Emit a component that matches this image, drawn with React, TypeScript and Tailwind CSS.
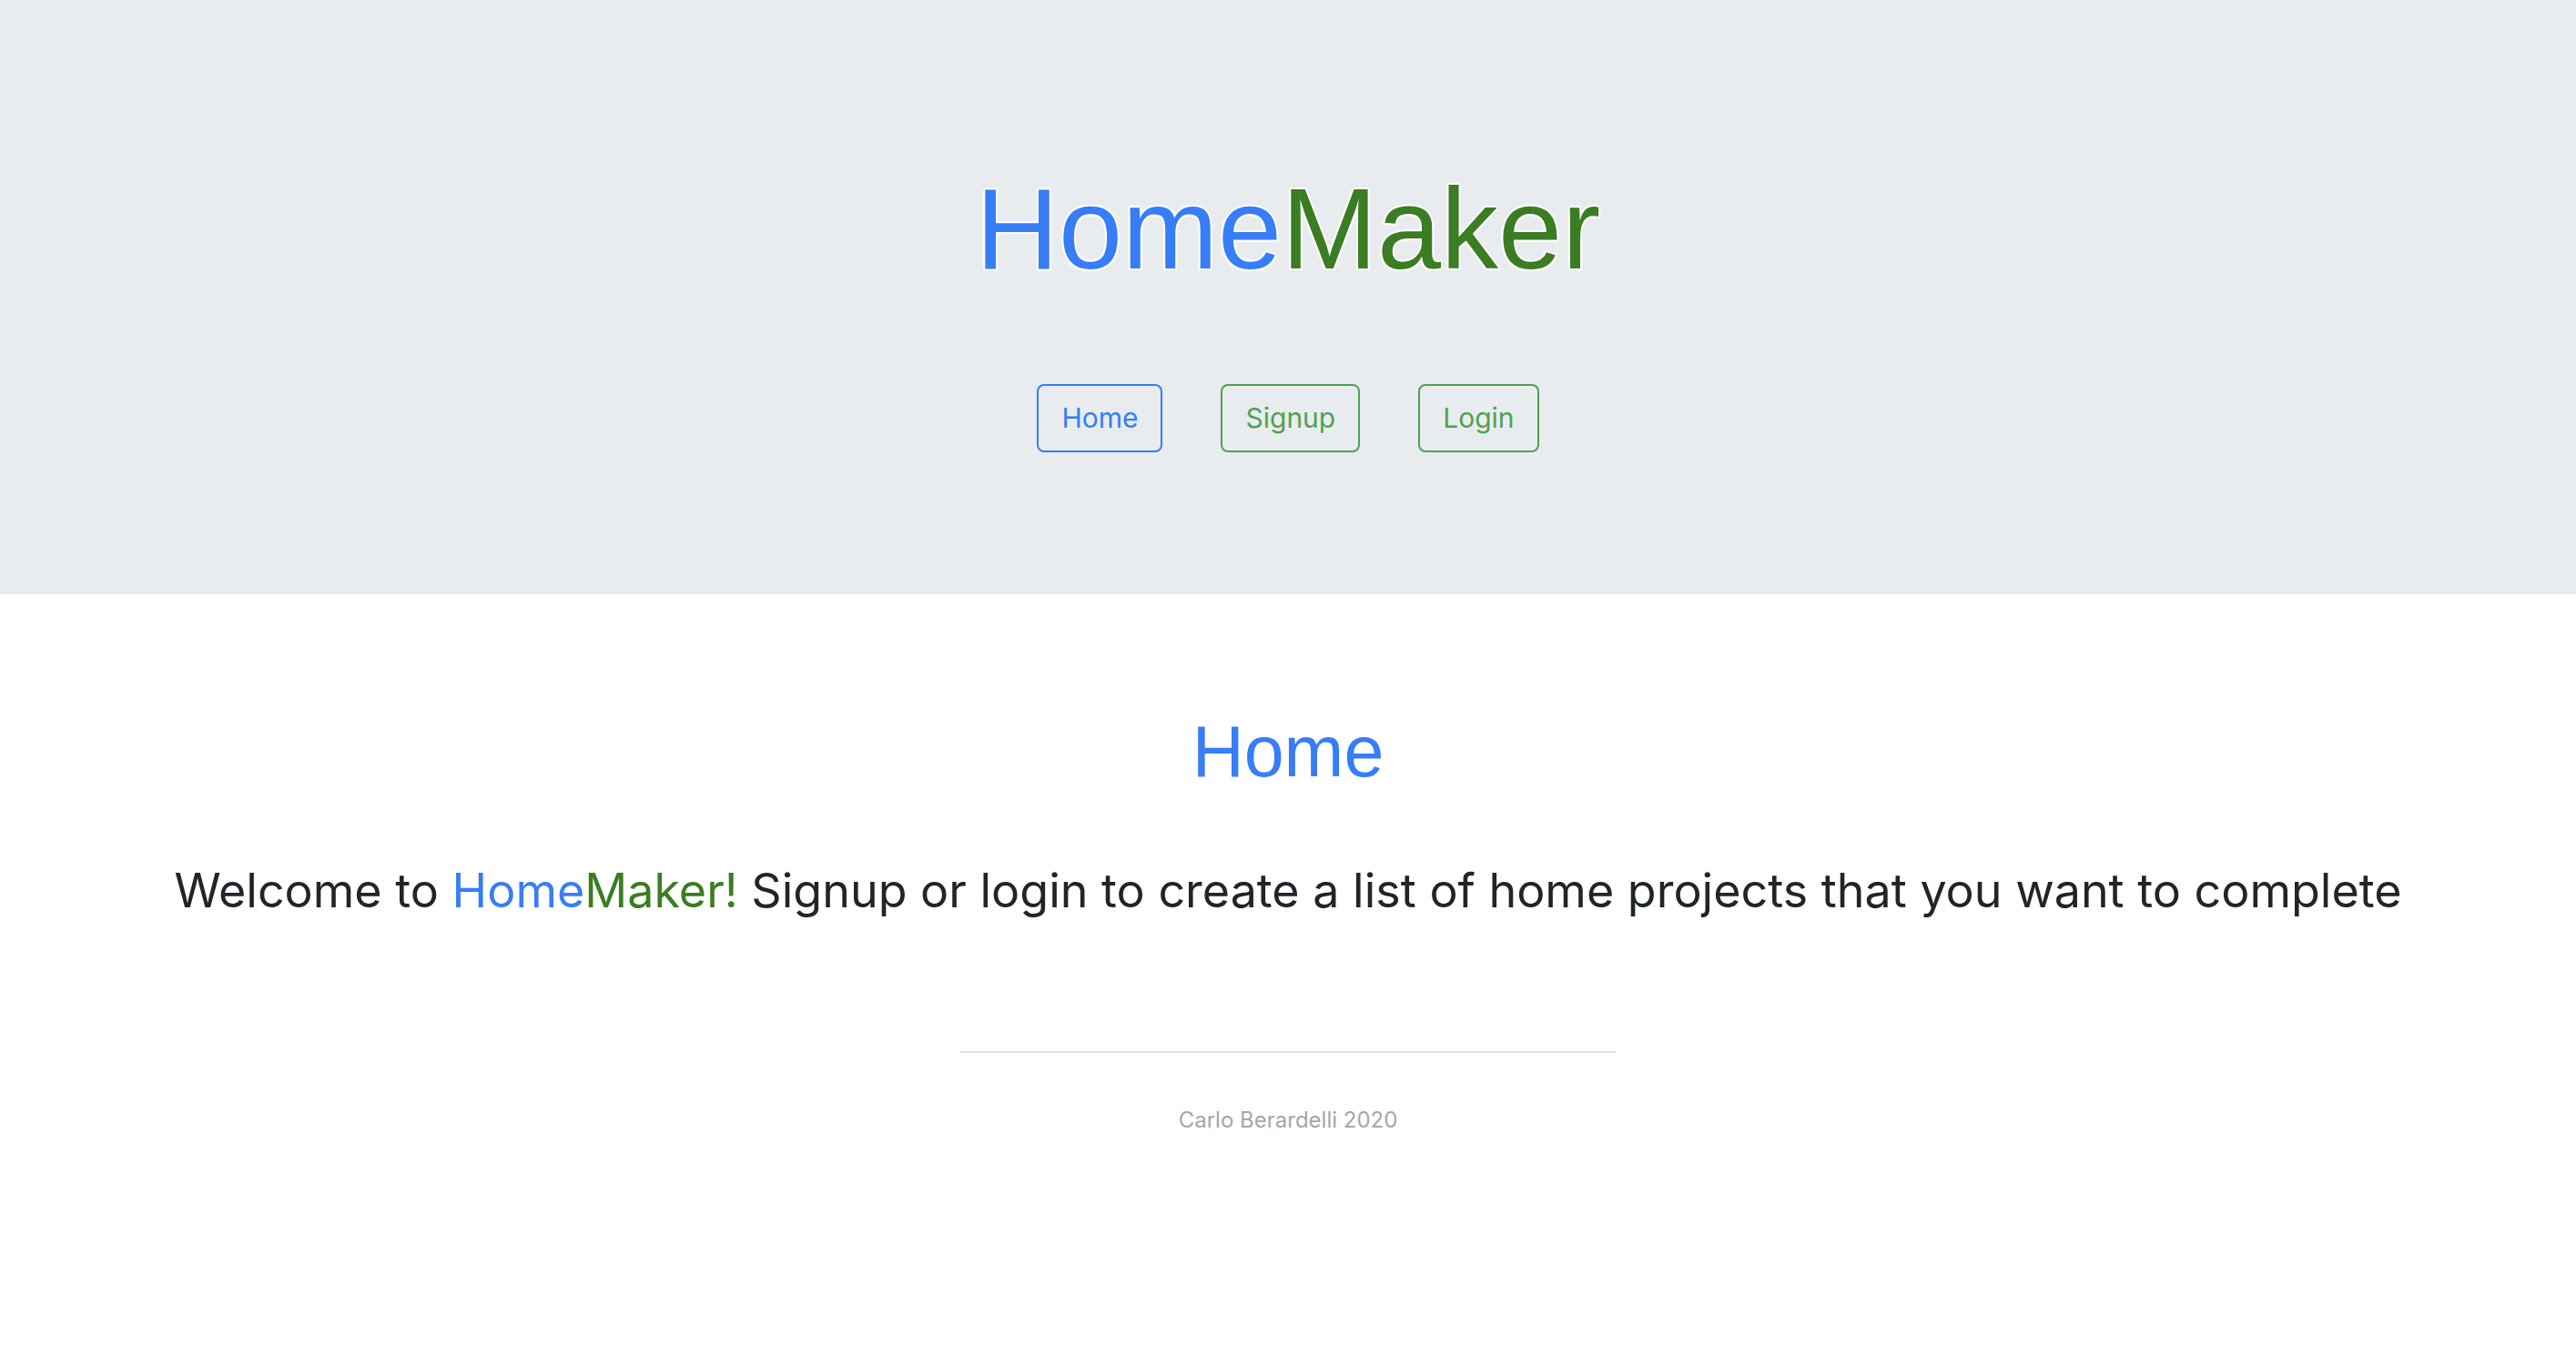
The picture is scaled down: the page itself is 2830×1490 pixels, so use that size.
export default function App() {
  return (
    <div className="min-h-screen bg-white font-['Inter',sans-serif] text-[#212529]">
      <header className="h-[653px] bg-[#e9ecef] flex flex-col items-center pt-[189px]">
        <h1 className="font-['Liberation_Sans',Arial,sans-serif] text-[126px] leading-none [text-shadow:2px_0_#fff,-2px_0_#fff,0_2px_#fff,0_-2px_#fff,1.5px_1.5px_#fff,-1.5px_-1.5px_#fff,1.5px_-1.5px_#fff,-1.5px_1.5px_#fff]">
          <span className="text-[#377df7]">Home</span>
          <span className="text-[#3a7d22]">Maker</span>
        </h1>
        <nav className="mt-[107px] flex gap-[64px]">
          <a className="h-[75px] px-[25px] flex items-center border-2 border-[#377df7] rounded-[8px] text-[30px] text-[#377df7]">
            Home
          </a>
          <a className="h-[75px] px-[25px] flex items-center border-2 border-[#4fa24f] rounded-[8px] text-[30px] text-[#4fa24f]">
            Signup
          </a>
          <a className="h-[75px] px-[25px] flex items-center border-2 border-[#4fa24f] rounded-[8px] text-[30px] text-[#4fa24f]">
            Login
          </a>
        </nav>
      </header>
      <main className="flex flex-col items-center">
        <h2 className="mt-[133px] font-['Liberation_Sans',Arial,sans-serif] text-[79px] leading-none text-[#377df7]">
          Home
        </h2>
        <p className="mt-[88px] text-[52px] leading-none">
          Welcome to <span className="text-[#377df7]">Home</span>
          <span className="text-[#3a7d22]">Maker!</span> Signup or login to create a list of home projects that you want to complete
        </p>
        <hr className="mt-[150px] w-[720px] border-t-2 border-[#dedede]" />
        <footer className="mt-[62px] text-[24px] leading-none text-[#a6a6a6]">
          Carlo Berardelli 2020
        </footer>
      </main>
    </div>
  );
}
